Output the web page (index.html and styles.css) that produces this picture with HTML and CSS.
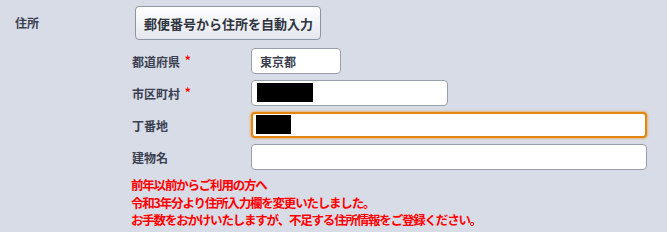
FILE: index.html
```html
<!DOCTYPE html>
<html lang="ja">
<head>
    <meta charset="UTF-8">
    <meta name="viewport" content="width=device-width, initial-scale=1.0">
    <title>住所入力</title>
    <link rel="stylesheet" href="styles.css">
</head>
<body>
    <div class="address-row">
        <div class="row-label">住所</div>

        <div class="row-body">
            <button type="button" class="zip-btn">郵便番号から住所を自動入力</button>

            <div class="fields">
                <label class="field-label" for="pref">都道府県 <span class="req">*</span></label>
                <div class="field">
                    <input type="text" id="pref" class="input input-s" value="東京都">
                </div>

                <label class="field-label" for="city">市区町村 <span class="req">*</span></label>
                <div class="field">
                    <input type="text" id="city" class="input input-m">
                    <span class="redact redact-city"></span>
                </div>

                <label class="field-label" for="street">丁番地</label>
                <div class="field">
                    <input type="text" id="street" class="input input-l is-focus">
                    <span class="redact redact-street"></span>
                </div>

                <label class="field-label" for="building">建物名</label>
                <div class="field">
                    <input type="text" id="building" class="input input-l">
                </div>
            </div>

            <p class="notice">
                前年以前からご利用の方へ<br>
                令和3年分より住所入力欄を変更いたしました。<br>
                お手数をおかけいたしますが、不足する住所情報をご登録ください。
            </p>
        </div>
    </div>
</body>
</html>
```

FILE: styles.css
```css
:root {
    --bg: #d8dce6;
    --text: #3a4050;
    --border: #9a9ea8;
    --focus: #e2860f;
    --red: #ff0000;
}

body {
    margin: 0;
    background: var(--bg);
    color: var(--text);
    font-family: "Noto Sans CJK JP", "Noto Sans", sans-serif;
    font-size: 12px;
}

.address-row {
    display: flex;
    padding: 6px 0 0 15px;
}

.row-label {
    width: 117px;
    font-weight: 700;
    line-height: 34px;
}

.row-body {
    flex: 1;
}

.zip-btn {
    margin-left: 3px;
    height: 34px;
    padding: 0 7px 0 8px;
    border: 1px solid #8e95a2;
    border-radius: 4px;
    background: linear-gradient(#ffffff, #e4e7ee);
    color: #2f3440;
    font-family: inherit;
    font-size: 13px;
    font-weight: 700;
    cursor: pointer;
}

.fields {
    display: grid;
    grid-template-columns: 119px 1fr;
    row-gap: 6px;
    margin-top: 8px;
    align-items: center;
}

.field-label {
    font-weight: 700;
}

.req {
    color: var(--red);
    position: relative;
    top: -2px;
    margin-left: 2px;
}

.field {
    position: relative;
    height: 26px;
}

.input {
    box-sizing: border-box;
    height: 26px;
    padding: 0 8px;
    border: 1px solid var(--border);
    border-radius: 4px;
    background: #fff;
    color: var(--text);
    font-family: inherit;
    font-size: 12px;
    font-weight: 700;
}

.input-s { width: 90px; }
.input-m { width: 197px; }
.input-l { width: 396px; }

.input.is-focus {
    border: 2px solid var(--focus);
    box-shadow: 0 0 2px 1px rgba(236, 150, 40, 0.55);
}

.redact {
    position: absolute;
    top: 3px;
    height: 19px;
    background: #000;
}

.redact-city {
    left: 6px;
    width: 56px;
}

.redact-street {
    left: 5px;
    width: 35px;
}

.notice {
    margin: 6px 0 0 -1px;
    color: var(--red);
    font-size: 12.5px;
    font-weight: 700;
    line-height: 17.5px;
    letter-spacing: -1.2px;
}
```
